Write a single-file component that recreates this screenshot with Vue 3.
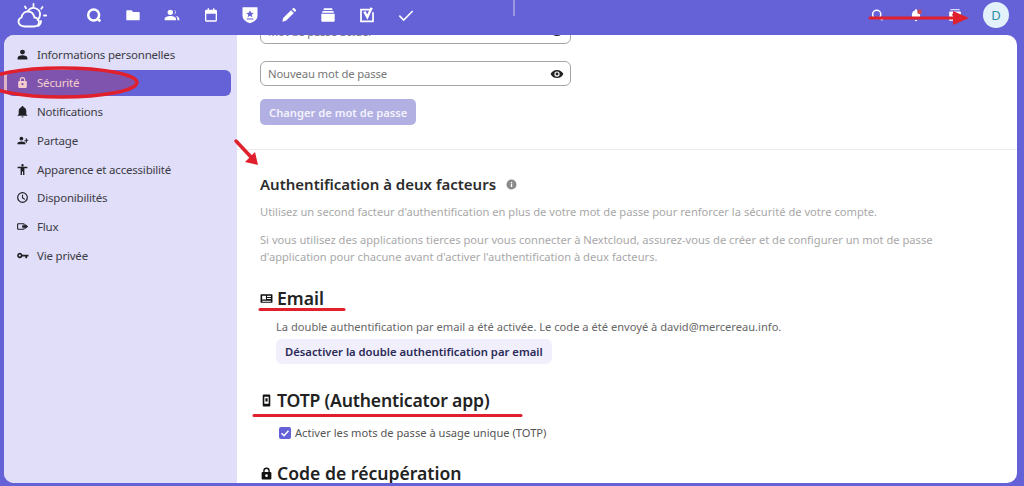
<script setup>
const nav = [
  { label: 'Informations personnelles', icon: 'M12 3a4.500 4.500 0 1 1 0 9 4.500 4.500 0 0 1 0-9zm0 10.500c4.800 0 9 1.900 9 4.500v3H3v-3c0-2.600 4.200-4.500 9-4.500z' },
  { label: 'Sécurité', active: true, icon: 'M12 2a5 5 0 0 1 5 5v2h1a2 2 0 0 1 2 2v9a2 2 0 0 1-2 2H6a2 2 0 0 1-2-2v-9a2 2 0 0 1 2-2h1V7a5 5 0 0 1 5-5zm0 2a3 3 0 0 0-3 3v2h6V7a3 3 0 0 0-3-3zm0 9a2 2 0 1 0 0 4 2 2 0 0 0 0-4z' },
  { label: 'Notifications', icon: 'M21 19v1H3v-1l2-2v-6c0-3.100 2-5.800 5-6.700V4a2 2 0 1 1 4 0v.3c3 .9 5 3.600 5 6.700v6l2 2zM14 21a2 2 0 0 1-4 0h4z' },
  { label: 'Partage', icon: 'M10 5a3.500 3.500 0 1 1 0 7 3.500 3.500 0 0 1 0-7zm0 9c4 0 7.500 1.500 7.500 3.500V19H2.500v-1.500C2.500 15.500 6 14 10 14zm8-6h2v2.500h2.500v2H20V16h-2v-2.500h-2.500v-2H18V8z' },
  { label: 'Apparence et accessibilité', icon: 'M12 2a2.200 2.200 0 1 1 0 4.400A2.200 2.200 0 0 1 12 2zm9 5v2.500h-5.500V22h-2.500v-6.500h-2V22H8.500V9.500H3V7h18z' },
  { label: 'Disponibilités', icon: 'M12 2a10 10 0 1 1 0 20 10 10 0 0 1 0-20zm0 2.200a7.800 7.800 0 1 0 0 15.600 7.800 7.800 0 0 0 0-15.600zM11 7h2v5.200l4 2.400-1 1.700-5-3V7z' },
  { label: 'Flux', icon: 'M4 6h10a2 2 0 0 1 2 2v2h-2V8H4v8h10v-2h2v2a2 2 0 0 1-2 2H4a2 2 0 0 1-2-2V8a2 2 0 0 1 2-2zm13 1.500L22.500 12 17 16.500V14h-6v-4h6V7.500z' },
  { label: 'Vie privée', icon: 'M7 7a5 5 0 0 1 4.800 3.500H23v3.200h-2.500V17h-3.200v-3.300h-5.500A5 5 0 1 1 7 7zm0 3a2 2 0 1 0 0 4 2 2 0 0 0 0-4z' },
]
</script>

<template>
  <div class="page">
    <header class="topbar">
      <div class="apps">
        <svg class="logo" viewBox="0 0 30 26" fill="none" stroke="#fff" stroke-width="1.800" stroke-linecap="round">
          <path d="M8 23.500h9c3 0 5-2 5-4.500s-2-4.500-4.500-4.500c-.8-3.500-3.500-6-6.500-6-3.300 0-6 2.500-6.500 6-2 .5-3 2.500-3 4.500 0 2.600 3 4.500 6.500 4.500z" />
          <path d="M11 8a6.500 6.500 0 0 1 12 4c0 2.200-1 3.800-2.500 5M21 23c2-1.200 3-3 3-5" />
          <path d="M16.500 1v2.500M8 3.500l1 1.700M25.500 4l-1.200 1.700M27 12.500h2.200" />
        </svg>
        <span class="app">
          <svg viewBox="0 0 24 24" fill="none" stroke="#fff" stroke-width="3.800"><circle cx="11.500" cy="12" r="8.200" /><path d="M17 17.500l4.500 3.800" /></svg>
        </span>
        <span class="app">
          <svg viewBox="0 0 24 24" fill="#fff"><path d="M3 5h7l2 2.500h9a1 1 0 0 1 1 1V19a1 1 0 0 1-1 1H3a1 1 0 0 1-1-1V6a1 1 0 0 1 1-1z" /></svg>
        </span>
        <span class="app">
          <svg viewBox="0 0 24 24" fill="#fff"><circle cx="9.500" cy="8" r="4" /><path d="M1 20v-2c0-2.800 3.800-4.500 8.500-4.500s8.500 1.700 8.500 4.500v2H1z" /><path d="M15 4.200a4 4 0 0 1 0 7.600 5.500 5.500 0 0 0 0-7.600zM17.500 13.600c3 .5 5.500 2 5.500 4.400v2h-3v-2.500c0-1.600-1-2.900-2.500-3.900z" /></svg>
        </span>
        <span class="app">
          <svg viewBox="0 0 24 24" fill="#fff"><path fill-rule="evenodd" d="M5 4h2V2h2v2h6V2h2v2h2a2 2 0 0 1 2 2v14a2 2 0 0 1-2 2H5a2 2 0 0 1-2-2V6a2 2 0 0 1 2-2zm0 6v10h14V10H5z" /></svg>
        </span>
        <span class="app">
          <svg class="shield" viewBox="0 0 24 24"><path fill="#fff" d="M2 1.500h20V13c0 5-5 8.500-10 10C7 21.500 2 18 2 13V1.500z" /><path fill="#6561d6" d="M12 5.500l1.500 3.500 3.500.3-2.700 2.300.9 3.400-3.200-1.900-3.200 1.900.9-3.400L7 9.300l3.500-.3L12 5.500zM7.500 16.500h9V18h-9z" /></svg>
        </span>
        <span class="app">
          <svg viewBox="0 0 24 24" fill="#fff"><path d="M2 22l1.200-5.500L15 4.700l4.300 4.300L7.500 20.800 2 22zM16.500 3.200l1.500-1.500a1.400 1.400 0 0 1 2 0l2.300 2.300a1.400 1.400 0 0 1 0 2l-1.500 1.500-4.300-4.300z" /></svg>
        </span>
        <span class="app">
          <svg viewBox="0 0 24 24" fill="#fff"><path d="M6 2h12l1 2.500H5L6 2zM4 6h16l1 2.500H3L4 6zM2 10h20v11a1 1 0 0 1-1 1H3a1 1 0 0 1-1-1V10z" /></svg>
        </span>
        <span class="app">
          <svg viewBox="0 0 24 24" fill="none" stroke="#fff"><path stroke-width="2.600" d="M21 8v13.500H3V4h15" /><path stroke-width="3.600" d="M8 7l4.500 8L19 1" /></svg>
        </span>
        <span class="app">
          <svg viewBox="0 0 24 24" fill="none" stroke="#fff" stroke-width="2.400"><path d="M2 13l6.500 6.500L22 6" /></svg>
        </span>
      </div>
      <span class="sep"></span>
      <div class="tools">
        <span class="tool"><svg viewBox="0 0 24 24" fill="none" stroke="#fff" stroke-width="2.600"><circle cx="11.500" cy="11" r="7" /><path d="M16.500 16l5 5" /></svg></span>
        <span class="tool"><svg viewBox="0 0 24 24" fill="#fff"><path d="M21 18v1H3v-1l2-2v-5c0-3 2-5.800 5-6.700V4a2 2 0 1 1 4 0v.3c3 .9 5 3.700 5 6.700v5l2 2zM14 20.500a2 2 0 0 1-4 0h4z" /><circle cx="18" cy="6.500" r="4" fill="#d0484e" /></svg></span>
        <span class="tool"><svg viewBox="0 0 24 24" fill="#fff"><path d="M4 2h16v2H4zM3 6h18a1 1 0 0 1 1 1v14a1 1 0 0 1-1 1H3a1 1 0 0 1-1-1V7a1 1 0 0 1 1-1z" /><path d="M8 10l8 8" stroke="#b04a70" stroke-width="5" /></svg></span>
        <span class="avatar">D</span>
      </div>
    </header>

    <div class="body">
      <nav class="side">
        <a v-for="item in nav" :key="item.label" class="row" :class="{ on: item.active }">
          <svg class="rowicon" viewBox="0 0 24 24"><path :d="item.icon" fill-rule="evenodd" /></svg>
          <span>{{ item.label }}</span>
        </a>
      </nav>

      <main class="content">
        <section class="pw">
          <div class="field">
            <span>Mot de passe actuel</span>
            <svg class="eye" viewBox="0 0 24 24"><path fill-rule="evenodd" d="M12 5c5 0 9.300 3 11 7-1.700 4-6 7-11 7S2.700 16 1 12c1.700-4 6-7 11-7zm0 2.500a4.500 4.500 0 1 0 0 9 4.500 4.500 0 0 0 0-9zm0 2a2.500 2.500 0 1 1 0 5 2.500 2.500 0 0 1 0-5z" /></svg>
          </div>
          <div class="field">
            <span>Nouveau mot de passe</span>
            <svg class="eye" viewBox="0 0 24 24"><path fill-rule="evenodd" d="M12 5c5 0 9.300 3 11 7-1.700 4-6 7-11 7S2.700 16 1 12c1.700-4 6-7 11-7zm0 2.500a4.500 4.500 0 1 0 0 9 4.500 4.500 0 0 0 0-9zm0 2a2.500 2.500 0 1 1 0 5 2.500 2.500 0 0 1 0-5z" /></svg>
          </div>
          <button class="primary">Changer de mot de passe</button>
        </section>

        <section class="twofa">
          <h2>
            Authentification à deux facteurs
            <svg class="info" viewBox="0 0 24 24"><path fill-rule="evenodd" d="M12 1a11 11 0 1 1 0 22 11 11 0 0 1 0-22zM10.500 10.500v7h3v-7h-3zm0-4v2.500h3V6.500h-3z" /></svg>
          </h2>
          <p>Utilisez un second facteur d'authentification en plus de votre mot de passe pour renforcer la sécurité de votre compte.</p>
          <p>Si vous utilisez des applications tierces pour vous connecter à Nextcloud, assurez-vous de créer et de configurer un mot de passe d'application pour chacune avant d'activer l'authentification à deux facteurs.</p>

          <h3 class="email">
            <svg viewBox="0 0 24 24"><path fill-rule="evenodd" d="M2 4h20a1 1 0 0 1 1 1v14a1 1 0 0 1-1 1H2a1 1 0 0 1-1-1V5a1 1 0 0 1 1-1zm2 3v7h7V7H4zm9 0v2h7V7h-7zm0 4v2h7v-2h-7zM4 16v2h16v-2H4z" /></svg>
            Email
          </h3>
          <div class="sub">
            <div>La double authentification par email a été activée. Le code a été envoyé à david@mercereau.info.</div>
            <button class="soft">Désactiver la double authentification par email</button>
          </div>

          <h3 class="totp">
            <svg viewBox="0 0 24 24"><path fill-rule="evenodd" d="M7 1h10a2 2 0 0 1 2 2v18a2 2 0 0 1-2 2H7a2 2 0 0 1-2-2V3a2 2 0 0 1 2-2zm1 4v13h8V5H8zm2 3h4v6h-4V8z" /></svg>
            <span class="totptext">TOTP (Authenticator app)</span>
          </h3>
          <label class="check">
            <span class="box"><svg viewBox="0 0 12 12" fill="none" stroke="#fff" stroke-width="1.600"><path d="M2.500 6.200l2.500 2.500 4.500-5" /></svg></span>
            Activer les mots de passe à usage unique (TOTP)
          </label>

          <h3 class="code">
            <svg viewBox="0 0 24 24"><path fill-rule="evenodd" d="M12 1a6 6 0 0 1 6 6v2h1a2 2 0 0 1 2 2v10a2 2 0 0 1-2 2H5a2 2 0 0 1-2-2V11a2 2 0 0 1 2-2h1V7a6 6 0 0 1 6-6zm0 2.500A3.500 3.500 0 0 0 8.500 7v2h7V7A3.500 3.500 0 0 0 12 3.500zM12 13.500a2.500 2.500 0 1 0 0 5 2.500 2.500 0 0 0 0-5z" /></svg>
            Code de récupération
          </h3>
        </section>
      </main>
    </div>

    <svg class="marks" viewBox="0 0 1024 486" fill="none" stroke="#e0202c" stroke-linecap="round">
      <ellipse cx="62" cy="82.500" rx="75" ry="14.500" stroke-width="3.500" fill="rgba(215,45,45,.24)" />
      <path d="M870 18H958" stroke-width="3" />
      <path d="M953 11l16 7-16 7z" fill="#e0202c" stroke="none" />
      <path d="M236 141l15 16" stroke-width="3.500" />
      <path d="M245 162l13 3-3-13z" fill="#e0202c" stroke="none" />
      <path d="M260 309.500H344" stroke-width="3" />
      <path d="M254 415.500H521" stroke-width="3" />
    </svg>
  </div>
</template>

<style scoped>
.page {
  position: relative;
  width: 1024px;
  height: 486px;
  overflow: hidden;
  background: #6561d6;
  font-family: "Noto Sans", "Open Sans", sans-serif;
  color: #333;
}
.topbar {
  position: relative;
  z-index: 2;
  height: 35px;
  display: flex;
  align-items: flex-start;
  background: #6561d6;
}
.apps {
  display: flex;
  align-items: center;
  height: 30px;
  padding-left: 17px;
}
.logo { width: 30px; height: 26px; margin-right: 27px; margin-top: 2px; }
.app {
  width: 39px;
  height: 30px;
  display: flex;
  align-items: center;
  justify-content: center;
}
.app svg { width: 16px; height: 16px; }
.app svg.shield { width: 18px; height: 18px; }
.sep {
  width: 2px;
  height: 16px;
  margin-left: 88px;
  background: #9a97e2;
}
.tools {
  margin-left: auto;
  display: flex;
  align-items: center;
  height: 30px;
  padding-right: 15px;
}
.tool {
  width: 39px;
  display: flex;
  justify-content: center;
}
.tool svg { width: 14px; height: 14px; }
.avatar {
  width: 26px;
  height: 26px;
  margin-left: 9px;
  border-radius: 50%;
  background: #e3f1fb;
  color: #2e8ea6;
  font-size: 13px;
  display: flex;
  align-items: center;
  justify-content: center;
}
.body {
  position: absolute;
  left: 4px;
  right: 7px;
  top: 35px;
  bottom: 3px;
  display: flex;
  border-radius: 10px;
  overflow: hidden;
  background: #fff;
}
.side {
  width: 233px;
  flex: none;
  background: #e0def8;
  padding: 6px 6px 0 3px;
  display: flex;
  flex-direction: column;
  gap: 2.750px;
  box-sizing: border-box;
}
.row {
  height: 26px;
  display: flex;
  align-items: center;
  gap: 8px;
  padding-left: 9px;
  border-radius: 6px;
  font-size: 11.500px;
  letter-spacing: -0.2px;
  color: #3c3c44;
}
.rowicon { width: 13px; height: 13px; fill: #1f1f26; flex: none; }
.row.on { background: #6561d6; color: #fff; }
.row.on .rowicon { fill: #fff; }
.content {
  flex: 1;
  min-width: 0;
  overflow: hidden;
}
.pw {
  margin-top: -16px;
  padding: 0 0 24px 23px;
  border-bottom: 1px solid #eceaf0;
  display: flex;
  flex-direction: column;
  align-items: flex-start;
}
.field {
  width: 311px;
  height: 25px;
  margin-bottom: 18px;
  padding: 0 6px 0 7px;
  box-sizing: border-box;
  border: 1px solid #a5a5a5;
  border-radius: 6px;
  display: flex;
  align-items: center;
  justify-content: space-between;
  font-size: 11.300px;
  letter-spacing: -0.15px;
  color: #777;
  background: #fff;
}
.field:first-child { margin-bottom: 17px; }
.field + .field { margin-bottom: 13px; }
.eye { width: 14px; height: 14px; fill: #222; }
.primary {
  height: 26px;
  padding: 0 9px;
  border: 0;
  border-radius: 5px;
  background: #b2afe2;
  color: #f4f3fc;
  font: 600 11.200px "Noto Sans", sans-serif;
}
.twofa { padding: 25px 0 0 23px; }
h2 {
  margin: 0 0 10px;
  height: 18px;
  display: flex;
  align-items: center;
  gap: 10px;
  font-size: 15px;
  font-weight: 600;
  color: #2c2c2c;
}
.info { width: 11px; height: 11px; fill: #8a8a8a; }
p {
  margin: 0 0 11px;
  width: 690px;
  font-size: 11.150px;
  line-height: 17px;
  color: #a8a8a8;
}
h3 {
  margin: 0;
  display: flex;
  align-items: center;
  gap: 4px;
  font-size: 17.600px;
  line-height: 22px;
  font-weight: 600;
  color: #222;
}
h3 svg { width: 13px; height: 13px; fill: #111; flex: none; }
.totptext { letter-spacing: -0.17px; }
.email { margin-top: 22px; }
.sub {
  padding-left: 16px;
  margin-top: 9px;
  font-size: 11.130px;
  line-height: 17px;
  color: #666;
}
.soft {
  display: block;
  height: 25px;
  margin-top: 4px;
  padding: 0 9px;
  border: 0;
  border-radius: 6px;
  background: #f0effb;
  color: #2b2a57;
  font: 600 11.250px "Noto Sans", sans-serif;
}
.totp { margin-top: 25px; }
.check {
  margin: 15px 0 0 19px;
  display: flex;
  align-items: center;
  gap: 4px;
  font-size: 11.130px;
  line-height: 14px;
  color: #555;
}
.box {
  width: 12px;
  height: 12px;
  border-radius: 2px;
  background: #6561d6;
  display: flex;
}
.code { margin-top: 22px; }
.marks {
  position: absolute;
  inset: 0;
  z-index: 3;
  pointer-events: none;
}
</style>
